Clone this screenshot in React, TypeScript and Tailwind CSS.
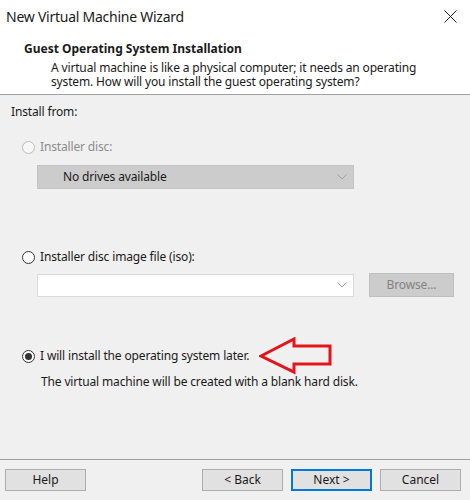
import React from 'react'

const font = { fontFamily: '"Noto Sans", "Open Sans", sans-serif' }

const Radio = ({ checked, disabled }: { checked?: boolean; disabled?: boolean }) => (
    <span
        className={`flex h-[13px] w-[13px] items-center justify-center rounded-full border ${
            disabled ? 'border-[#bcbcbc] bg-[#f7f7f7]' : 'border-[#333333] bg-white'
        }`}
    >
        {checked && <span className="block h-[7px] w-[7px] rounded-full bg-[#333333]" />}
    </span>
)

const Chevron = ({ color }: { color: string }) => (
    <svg width="10" height="6" viewBox="0 0 10 6">
        <path d="M0.5 0.5 L5 5 L9.5 0.5" fill="none" stroke={color} strokeWidth="1" />
    </svg>
)

const Button = ({ label, primary }: { label: string; primary?: boolean }) => (
    <div
        className={`flex h-[22px] w-[81px] items-center justify-center bg-[#e1e1e1] text-[12px] text-[#1a1a1a] ${
            primary ? 'border-2 border-[#0078d7]' : 'border border-[#adadad]'
        }`}
    >
        {label}
    </div>
)

const App = () => {
    return (
        <div className="flex h-[500px] w-[470px] flex-col bg-[#f0f0f0] text-[#1a1a1a]" style={font}>
            {/* title + header */}
            <div className="h-[94px] bg-white">
                <div className="flex h-[33px] items-center justify-between pl-[6px] pr-[13px]">
                    <span className="text-[14px] tracking-[-0.25px] text-[#1a1a1a]">New Virtual Machine Wizard</span>
                    <svg width="13" height="13" viewBox="0 0 13 13">
                        <path d="M0.5 0.5 L12.5 12.5 M12.5 0.5 L0.5 12.5" stroke="#222" strokeWidth="1" />
                    </svg>
                </div>
                <div className="pl-[24px] pt-[8px] text-[12px] font-bold leading-[16px]">
                    Guest Operating System Installation
                </div>
                <div className="mt-[4px] pl-[51px] pr-[40px] text-[12px] leading-[14px] tracking-[-0.15px]">
                    A virtual machine is like a physical computer; it needs an operating system. How will you
                    install the guest operating system?
                </div>
            </div>
            <div className="h-px bg-[#a0a0a0]" />

            {/* body */}
            <div className="flex flex-1 flex-col px-[11px] pt-[9px] text-[12px] tracking-[-0.15px]">
                <div className="leading-[15px]">Install from:</div>

                <div className="ml-[11px] mt-[20px] flex h-[16px] items-center gap-[5px] text-[#8c8c8c]">
                    <Radio disabled />
                    <span>Installer disc:</span>
                </div>
                <div className="ml-[26px] mt-[10px] flex h-[24px] w-[317px] items-center justify-between border border-[#c4c4c4] bg-[#cccccc] pl-[25px] pr-[6px]">
                    <span className="text-[#1a1a1a]">No drives available</span>
                    <Chevron color="#a3a3a3" />
                </div>

                <div className="ml-[11px] mt-[60px] flex h-[16px] items-center gap-[5px]">
                    <Radio />
                    <span>Installer disc image file (iso):</span>
                </div>
                <div className="mt-[8px] flex items-center">
                    <div className="ml-[26px] flex h-[23px] w-[317px] items-center justify-between border border-[#d9d9d9] bg-white pr-[6px]">
                        <span />
                        <Chevron color="#a3a3a3" />
                    </div>
                    <div className="ml-[15px] flex h-[24px] w-[85px] items-center justify-center border border-[#bfbfbf] bg-[#cccccc] text-[#838383]">
                        Browse...
                    </div>
                </div>

                <div className="ml-[11px] mt-[51px] flex h-[16px] items-center gap-[5px]">
                    <Radio checked />
                    <span>I will install the operating system later.</span>
                    <svg className="ml-[5px]" width="74" height="38" viewBox="0 0 74 38">
                        <path
                            d="M2 19 L35 2 L35 9 L71 9 L71 27 L35 27 L35 35 Z"
                            fill="none"
                            stroke="#e3141b"
                            strokeWidth="3"
                            strokeLinejoin="miter"
                        />
                    </svg>
                </div>
                <div className="ml-[30px] mt-[10px] leading-[15px]">
                    The virtual machine will be created with a blank hard disk.
                </div>
            </div>

            {/* footer */}
            <div className="h-px bg-[#a0a0a0]" />
            <div className="flex h-[40px] items-start pl-[5px] pr-[9px] pt-[9px]">
                <Button label="Help" />
                <div className="flex-1" />
                <div className="flex gap-[8px]">
                    <Button label="< Back" />
                    <Button label="Next >" primary />
                    <Button label="Cancel" />
                </div>
            </div>
        </div>
    )
}

export default App
